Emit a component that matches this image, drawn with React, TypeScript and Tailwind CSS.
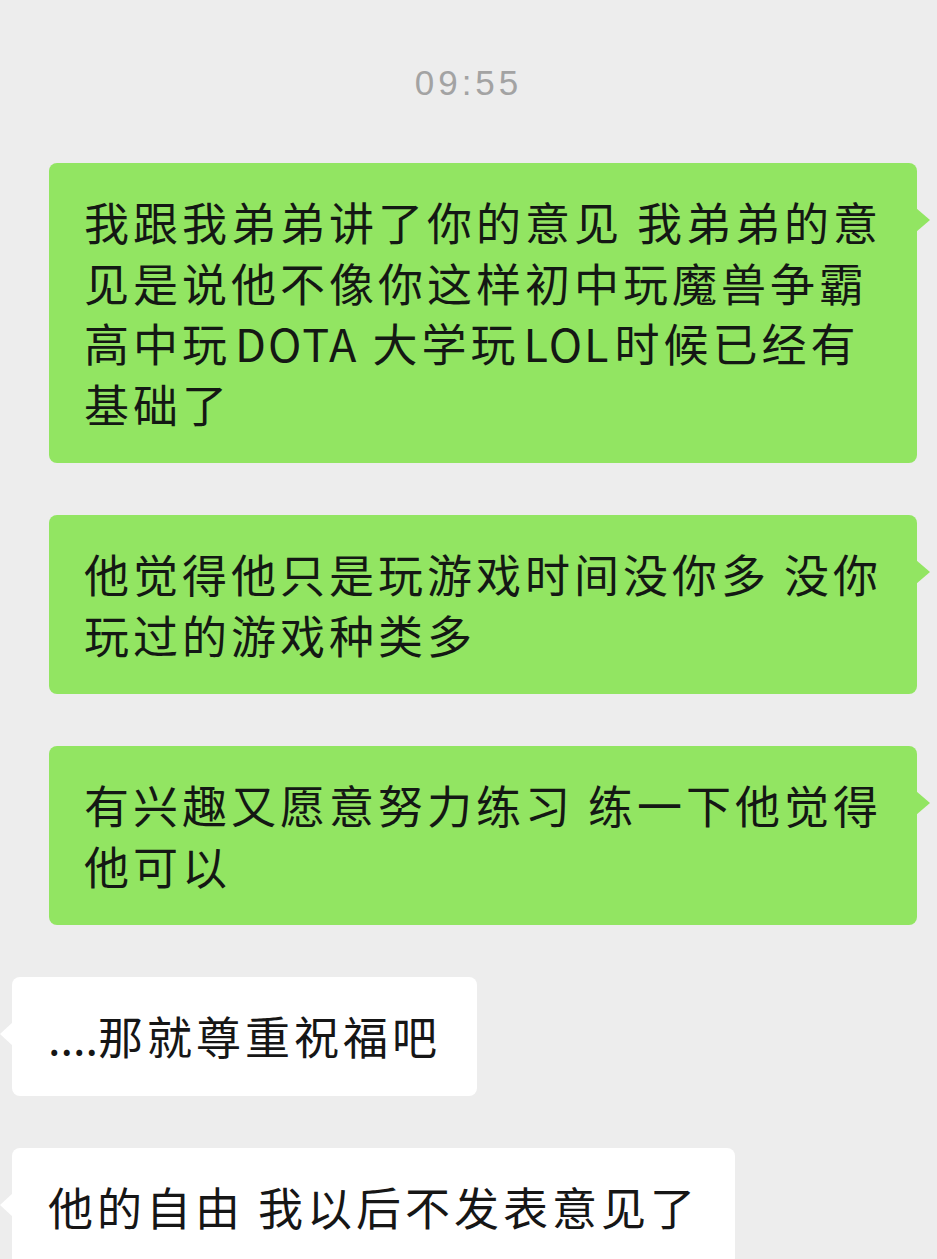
const cjk = "font-['Noto_Sans_CJK_SC',sans-serif]";

const Outgoing = ({ lines }: { lines: React.ReactNode[] }) => (
    <div className="relative w-[868px] self-end rounded-lg bg-[#92e562] px-[35px] py-[29px]">
        <span className="absolute right-[-13px] top-[45px] h-0 w-0 border-y-[12px] border-l-[14px] border-y-transparent border-l-[#92e562]" />
        {lines.map((line, i) => (
            <div key={i} className="whitespace-pre text-[45px] leading-[60.5px] tracking-[4px] text-[#141814]">
                {line}
            </div>
        ))}
    </div>
);

const Incoming = ({ children }: { children: React.ReactNode }) => (
    <div className="relative self-start rounded-lg bg-white px-[36px] py-[29px]">
        <span className="absolute left-[-12px] top-[45px] h-0 w-0 border-y-[12px] border-r-[13px] border-y-transparent border-r-white" />
        <div className="whitespace-pre text-[45px] leading-[60.5px] tracking-[4px] text-[#161616]">
            {children}
        </div>
    </div>
);

const App = () => {
    return (
        <div className={`min-h-[1259px] w-full overflow-hidden bg-[#ededed] ${cjk}`}>
            <div className="flex justify-center pt-[63px]">
                <span className="font-['Liberation_Sans',sans-serif] text-[35px] leading-[40px] tracking-[4px] text-[#a3a3a3]">
                    09:55
                </span>
            </div>
            <div className="mt-[60px] flex flex-col gap-[52px] pl-[12px] pr-[20px]">
                <Outgoing
                    lines={[
                        "我跟我弟弟讲了你的意见 我弟弟的意",
                        "见是说他不像你这样初中玩魔兽争霸",
                        <>
                            高中玩<span className="ml-[4px] tracking-[2px]">DOTA</span> 大学玩
                            <span className="ml-[4px] mr-[4px] tracking-[2px]">LOL</span>时候已经有
                        </>,
                        "基础了",
                    ]}
                />
                <Outgoing
                    lines={[
                        "他觉得他只是玩游戏时间没你多 没你",
                        "玩过的游戏种类多",
                    ]}
                />
                <Outgoing
                    lines={[
                        "有兴趣又愿意努力练习 练一下他觉得",
                        "他可以",
                    ]}
                />
                <Incoming>
                    <span className="tracking-[0px]">....</span>那就尊重祝福吧
                </Incoming>
                <Incoming>他的自由 我以后不发表意见了</Incoming>
            </div>
        </div>
    );
};

export default App;
